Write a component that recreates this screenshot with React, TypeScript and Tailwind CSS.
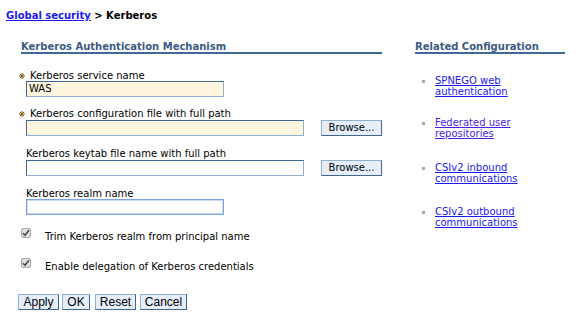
import React from "react";

const inputCls =
  "block h-[16px] border border-t-[#3f6796] border-l-[#3f6796] border-r-[#8fb0d2] border-b-[#8fb0d2] bg-[#fdf5de] px-[2px] text-[10px] leading-[14px] text-black";

function BrowseBtn() {
  return (
    <div className="ml-[17px] flex h-[16px] w-[61px] items-center justify-center border border-t-[#8fb0d2] border-l-[#8fb0d2] border-r-[#3f6796] border-b-[#3f6796] bg-[#e6eefb] text-[10px] leading-[12px] text-black">
      Browse...
    </div>
  );
}

function Check() {
  return (
    <span className="flex h-[10px] w-[10px] shrink-0 items-center justify-center rounded-[2px] border border-[#a8a8a8] bg-[#dedede]">
      <svg width="8" height="8" viewBox="0 0 8 8">
        <path d="M1 4.2 L3 6.3 L7 1.2" fill="none" stroke="#4a4a4a" strokeWidth="1.6" />
      </svg>
    </span>
  );
}

function Star() {
  return (
    <span className="ml-[1px] flex w-[11px] items-center">
      <svg width="6" height="6" viewBox="0 0 6 6">
        <path d="M3 0 V6 M0 3 H6 M0.9 0.9 L5.1 5.1 M5.1 0.9 L0.9 5.1" stroke="#7a6414" strokeWidth="1" />
      </svg>
    </span>
  );
}

function Btn({ w, ml, children }: { w: string; ml: string; children: React.ReactNode }) {
  return (
    <div
      className={`${w} ${ml} flex h-[16px] items-center justify-center border border-t-[#8fb0d2] border-l-[#8fb0d2] border-r-[#3f6796] border-b-[#3f6796] bg-[#e6eefb] text-[12px] leading-[14px] text-black`}
      style={{ fontFamily: '"Liberation Sans", Arial, sans-serif' }}
    >
      {children}
    </div>
  );
}

function Link({ l1, l2, mt, color }: { l1: string; l2: string; mt: string; color?: string }) {
  return (
    <div className={`${mt} relative flex`}>
      <span className="ml-[7px] mt-[5px] h-[3px] w-[3px] shrink-0 bg-[#a9a9a9]" />
      <div className={`ml-[10px] leading-[11px] underline ${color ?? "text-[#1a1aee]"}`}>
        {l1}
        <br />
        {l2}
      </div>
    </div>
  );
}

export default function App() {
  return (
    <div
      className="h-[324px] w-[579px] overflow-hidden bg-white text-[10px] text-black"
      style={{ fontFamily: '"DejaVu Sans", Verdana, sans-serif' }}
    >
      <div className="pl-[6px] pt-[10px] font-bold leading-[12px]">
        <span className="text-[#1a1aee] underline">Global security</span>
        <span> &gt; Kerberos</span>
      </div>

      <div className="mt-[20px] flex">
        {/* left column */}
        <div className="ml-[18px] w-[364px]">
          <div className="ml-[3px] border-b-2 border-[#3d6a9a] font-bold leading-[10px] text-[#3c5a82]">
            Kerberos Authentication Mechanism
          </div>

          <div className="mt-[16px] flex leading-[11px]">
            <Star />
            <span>Kerberos service name</span>
          </div>
          <div className={`${inputCls} ml-[8px] w-[198px]`}>WAS</div>

          <div className="mt-[11px] flex leading-[11px]">
            <Star />
            <span>Kerberos configuration file with full path</span>
          </div>
          <div className="ml-[8px] mt-[1px] flex">
            <div className={`${inputCls} w-[278px]`} />
            <BrowseBtn />
          </div>

          <div className="mt-[12px] pl-[8px] leading-[11px]">Kerberos keytab file name with full path</div>
          <div className="ml-[8px] mt-[1px] flex">
            <div className={`${inputCls} w-[278px] bg-white`} />
            <BrowseBtn />
          </div>

          <div className="mt-[12px] pl-[8px] leading-[11px]">Kerberos realm name</div>
          <div className="ml-[8px] h-[16px] w-[198px] border border-[#7fa3e0] bg-white shadow-[inset_0_0_0_1px_#c9daf5]" />

          <div className="ml-[3px] mt-[13px] flex items-start">
            <Check />
            <span className="ml-[14px] mt-[3px] leading-[12px]">Trim Kerberos realm from principal name</span>
          </div>
          <div className="ml-[3px] mt-[15px] flex items-start">
            <Check />
            <span className="ml-[14px] mt-[3px] leading-[12px]">Enable delegation of Kerberos credentials</span>
          </div>

          <div className="mt-[21px] flex">
            <Btn w="w-[41px]" ml="ml-0">Apply</Btn>
            <Btn w="w-[28px]" ml="ml-[3px]">OK</Btn>
            <Btn w="w-[41px]" ml="ml-[5px]">Reset</Btn>
            <Btn w="w-[47px]" ml="ml-[4px]">Cancel</Btn>
          </div>
        </div>

        {/* right column */}
        <div className="ml-[33px] w-[150px]">
          <div className="border-b-2 border-[#3d6a9a] font-bold leading-[10px] text-[#3c5a82]">
            Related Configuration
          </div>
          <Link mt="mt-[21px]" l1="SPNEGO web" l2="authentication" />
          <Link mt="mt-[20px]" l1="Federated user" l2="repositories" color="text-[#4a1ee6]" />
          <Link mt="mt-[23px]" l1="CSIv2 inbound" l2="communications" />
          <Link mt="mt-[22px]" l1="CSIv2 outbound" l2="communications" />
        </div>
      </div>
    </div>
  );
}
